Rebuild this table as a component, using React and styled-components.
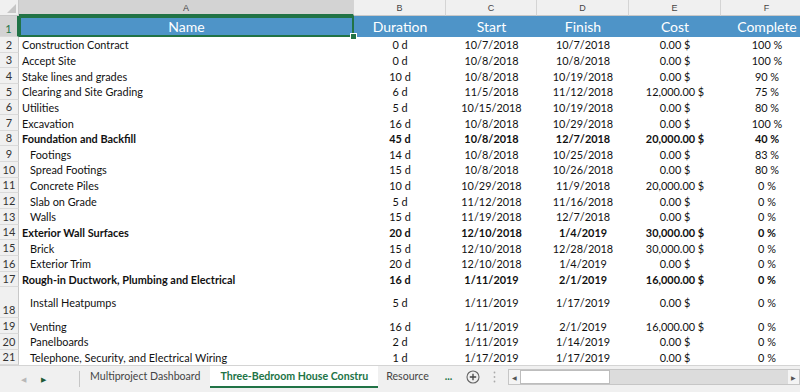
import React from "react";
import styled, { createGlobalStyle } from "styled-components";

const GlobalStyle = createGlobalStyle`
  html, body {
    margin: 0;
    padding: 0;
    background: #ffffff;
  }
  body {
    font-family: Lato, "Open Sans", sans-serif;
    overflow: hidden;
  }
`;

const COLS = "19px 335px 92px 91px 92px 92px 92px";

const tasks = [
  ["Construction Contract", "0 d", "10/7/2018", "10/7/2018", "0.00 $", "100 %"],
  ["Accept Site", "0 d", "10/8/2018", "10/8/2018", "0.00 $", "100 %"],
  ["Stake lines and grades", "10 d", "10/8/2018", "10/19/2018", "0.00 $", "90 %"],
  ["Clearing and Site Grading", "6 d", "11/5/2018", "11/12/2018", "12,000.00 $", "75 %"],
  ["Utilities", "5 d", "10/15/2018", "10/19/2018", "0.00 $", "80 %"],
  ["Excavation", "16 d", "10/8/2018", "10/29/2018", "0.00 $", "100 %"],
  ["Foundation and Backfill", "45 d", "10/8/2018", "12/7/2018", "20,000.00 $", "40 %", "bold"],
  ["Footings", "14 d", "10/8/2018", "10/25/2018", "0.00 $", "83 %", "sub"],
  ["Spread Footings", "15 d", "10/8/2018", "10/26/2018", "0.00 $", "80 %", "sub"],
  ["Concrete Piles", "10 d", "10/29/2018", "11/9/2018", "20,000.00 $", "0 %", "sub"],
  ["Slab on Grade", "5 d", "11/12/2018", "11/16/2018", "0.00 $", "0 %", "sub"],
  ["Walls", "15 d", "11/19/2018", "12/7/2018", "0.00 $", "0 %", "sub"],
  ["Exterior Wall Surfaces", "20 d", "12/10/2018", "1/4/2019", "30,000.00 $", "0 %", "bold"],
  ["Brick", "15 d", "12/10/2018", "12/28/2018", "30,000.00 $", "0 %", "sub"],
  ["Exterior Trim", "20 d", "12/10/2018", "1/4/2019", "0.00 $", "0 %", "sub"],
  ["Rough-in Ductwork, Plumbing and Electrical", "16 d", "1/11/2019", "2/1/2019", "16,000.00 $", "0 %", "bold"],
  ["Install Heatpumps", "5 d", "1/11/2019", "1/17/2019", "0.00 $", "0 %", "sub", 31],
  ["Venting", "16 d", "1/11/2019", "2/1/2019", "16,000.00 $", "0 %", "sub"],
  ["Panelboards", "2 d", "1/11/2019", "1/14/2019", "0.00 $", "0 %", "sub"],
  ["Telephone, Security, and Electrical Wiring", "1 d", "1/17/2019", "1/17/2019", "0.00 $", "0 %", "sub"],
];

const Window = styled.div`
  width: 800px;
  height: 392px;
  display: flex;
  flex-direction: column;
  overflow: hidden;
  background: #fff;
`;

const Sheet = styled.div`
  flex: 1;
  overflow: hidden;
  display: flex;
  flex-direction: column;
`;

const Row = styled.div`
  display: grid;
  grid-template-columns: ${COLS};
  height: ${(p) => p.$h}px;
  flex: none;
`;

const Corner = styled.div`
  background: #f0f0f0;
  border-right: 1px solid #c8c8c8;
  border-bottom: 1px solid #c8c8c8;
  position: relative;
  &::after {
    content: "";
    position: absolute;
    right: 2px;
    bottom: 2px;
    border-style: solid;
    border-width: 0 0 9px 9px;
    border-color: transparent transparent #c6c6c6 transparent;
  }
`;

const ColLetter = styled.div`
  background: ${(p) => (p.$active ? "#d3d3d3" : "#f0f0f0")};
  border-right: 1px solid #d4d4d4;
  border-bottom: ${(p) => (p.$active ? "2px solid #217346" : "1px solid #c8c8c8")};
  color: #444;
  font-family: "Liberation Sans", Arial, sans-serif;
  font-size: 9px;
  display: flex;
  align-items: center;
  justify-content: center;
  box-sizing: border-box;
  padding-top: 1px;
`;

const RowNum = styled.div`
  background: ${(p) => (p.$active ? "#d3d3d3" : "#f0f0f0")};
  color: ${(p) => (p.$active ? "#217346" : "#333")};
  border-right: ${(p) => (p.$active ? "2px solid #217346" : "1px solid #c8c8c8")};
  border-bottom: 1px solid #dadada;
  box-sizing: border-box;
  font-size: 11px;
  display: flex;
  align-items: flex-end;
  justify-content: center;
  padding-bottom: 1px;
`;

const HeadCell = styled.div`
  background: #4e94c8;
  color: #fff;
  font-size: 14px;
  display: flex;
  align-items: center;
  justify-content: center;
  white-space: nowrap;
  position: relative;
`;

const Selected = styled(HeadCell)`
  box-shadow: inset 0 0 0 2px #217346;
  &::after {
    content: "";
    position: absolute;
    right: -3px;
    bottom: -3px;
    width: 5px;
    height: 5px;
    background: #217346;
    border: 1px solid #fff;
    z-index: 2;
  }
`;

const Cell = styled.div`
  font-size: 10.9px;
  color: #111;
  font-weight: ${(p) => (p.$bold ? 700 : 400)};
  display: flex;
  align-items: center;
  justify-content: ${(p) => (p.$left ? "flex-start" : "center")};
  padding-left: ${(p) => (p.$indent ? 11 : p.$left ? 3 : 0)}px;
  white-space: nowrap;
  overflow: hidden;
`;

const TabBar = styled.div`
  height: 26px;
  flex: none;
  background: #f0f0f0;
  border-top: 1px solid #d4d4d4;
  display: flex;
  align-items: stretch;
  font-size: 10.6px;
  color: #444;
`;

const NavArrows = styled.div`
  width: 80px;
  display: flex;
  align-items: center;
  gap: 15px;
  padding-left: 21px;
  box-sizing: border-box;
  border-right: 1px solid #c6c6c6;
  margin: 5px 0;
  font-size: 7px;
`;

const Arrow = styled.span`
  color: ${(p) => (p.$dim ? "#b8b8b8" : "#1e5a38")};
`;

const Tab = styled.div`
  display: flex;
  align-items: center;
  padding: 0 ${(p) => (p.$pad ?? 10)}px;
  white-space: nowrap;
  background: ${(p) => (p.$active ? "#fff" : "transparent")};
  color: ${(p) => (p.$active ? "#217346" : "#444")};
  font-weight: ${(p) => (p.$active ? 700 : 400)};
  border-bottom: ${(p) => (p.$active ? "2px solid #217346" : "2px solid transparent")};
  margin-bottom: 4px;
  overflow: hidden;
`;

const More = styled.span`
  color: #217346;
  font-weight: 700;
  margin-left: 8px;
  display: flex;
  align-items: center;
  padding-bottom: 6px;
`;

const AddBtn = styled.div`
  display: flex;
  align-items: center;
  margin-left: 14px;
  padding-bottom: 4px;
`;

const Dots = styled.div`
  display: flex;
  align-items: center;
  margin-left: 13px;
  padding-bottom: 4px;
`;

const Scroll = styled.div`
  flex: 1;
  margin: 3px 0 7px 12px;
  display: flex;
  background: #dcdcdc;
  border: 1px solid #c6c6c6;
`;

const ScrollBtn = styled.div`
  width: 11px;
  display: flex;
  align-items: center;
  justify-content: center;
  background: #f4f4f4;
  font-size: 6px;
  color: #555;
`;

const Thumb = styled.div`
  width: 90px;
  background: #fff;
  border: 1px solid #bdbdbd;
  box-sizing: border-box;
`;

const Track = styled.div`
  flex: 1;
`;

export default function App() {
  const letters = ["A", "B", "C", "D", "E", "F"];
  const heads = ["Name", "Duration", "Start", "Finish", "Cost", "Complete"];
  return (
    <Window>
      <GlobalStyle />
      <Sheet>
        <Row $h={16}>
          <Corner />
          {letters.map((l, i) => (
            <ColLetter key={l} $active={i === 0}>{l}</ColLetter>
          ))}
        </Row>
        <Row $h={21}>
          <RowNum $active>1</RowNum>
          {heads.map((h, i) =>
            i === 0 ? <Selected key={h}>{h}</Selected> : <HeadCell key={h}>{h}</HeadCell>
          )}
        </Row>
        {tasks.map((t, i) => {
          const kind = t[6];
          const bold = kind === "bold";
          return (
            <Row key={i} $h={t[7] || 15.65}>
              <RowNum>{i + 2}</RowNum>
              <Cell $left $indent={kind === "sub"} $bold={bold}>{t[0]}</Cell>
              {t.slice(1, 6).map((v, j) => (
                <Cell key={j} $bold={bold}>{v}</Cell>
              ))}
            </Row>
          );
        })}
      </Sheet>
      <TabBar>
        <NavArrows>
          <Arrow $dim>◀</Arrow>
          <Arrow>▶</Arrow>
        </NavArrows>
        <Tab>Multiproject Dashboard</Tab>
        <Tab $active>Three-Bedroom House Constru</Tab>
        <Tab $pad={8}>Resource</Tab>
        <More>...</More>
        <AddBtn>
          <svg width="14" height="14" viewBox="0 0 14 14">
            <circle cx="7" cy="7" r="6" fill="none" stroke="#666" strokeWidth="1.1" />
            <path d="M7 3.8v6.4M3.8 7h6.4" stroke="#444" strokeWidth="1.3" />
          </svg>
        </AddBtn>
        <Dots>
          <svg width="3" height="12" viewBox="0 0 3 12">
            <circle cx="1.5" cy="1.5" r="0.9" fill="#aaa" />
            <circle cx="1.5" cy="6" r="0.9" fill="#aaa" />
            <circle cx="1.5" cy="10.5" r="0.9" fill="#aaa" />
          </svg>
        </Dots>
        <Scroll>
          <ScrollBtn>◀</ScrollBtn>
          <Thumb />
          <Track />
          <ScrollBtn>▶</ScrollBtn>
        </Scroll>
      </TabBar>
    </Window>
  );
}
